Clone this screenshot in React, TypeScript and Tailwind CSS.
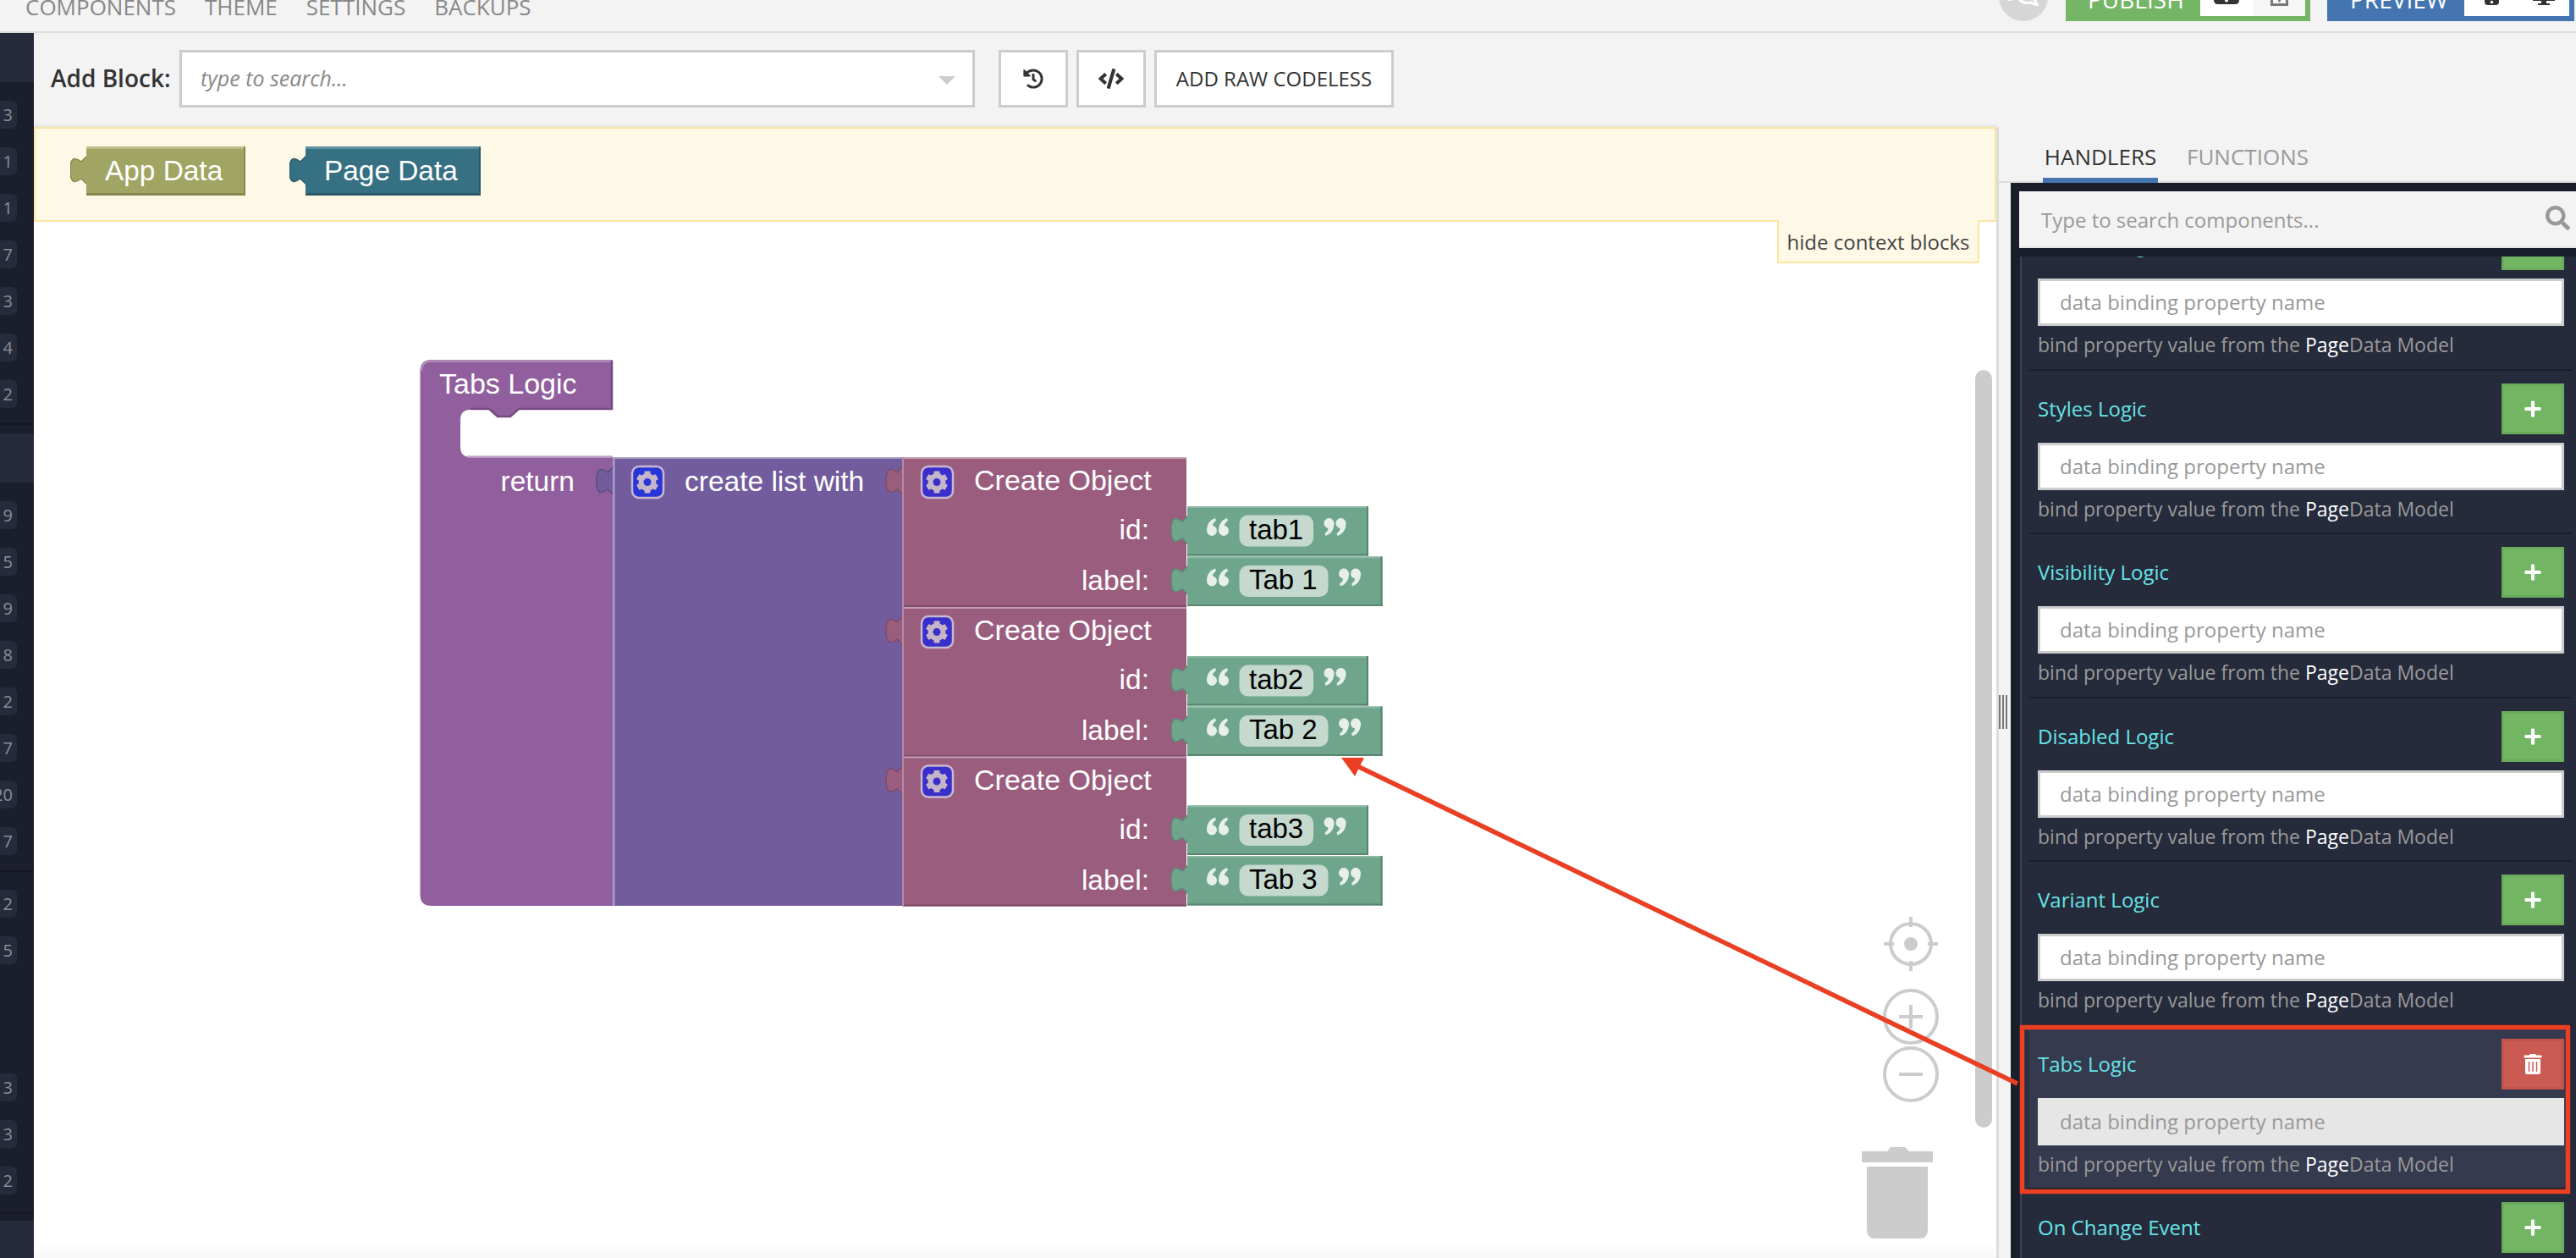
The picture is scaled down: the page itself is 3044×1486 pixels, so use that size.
import { FaCode, FaHistory, FaPlus, FaRegComments, FaSearch, FaTrashAlt } from "react-icons/fa";

// =============================================================================
// App.tsx
// Codeless logic editor: top nav, block canvas and the handlers panel.
// =============================================================================

const BLOCK_FONT = "font-['Liberation_Sans',Arial,sans-serif]";

// ---------------------------------------------------------------------------
// Blockly-style pieces (page coordinates, the overlay svg uses them directly)
// ---------------------------------------------------------------------------

function puzzleTab(x: number, y: number) {
  return `M ${x + 1},${y - 2} L ${x - 6},${y + 5} C ${x - 12},${y + 1} ${x - 19},${y - 3} ${x - 19},${y + 15} C ${x - 19},${y + 33} ${x - 12},${y + 29} ${x - 6},${y + 25} L ${x + 1},${y + 32} Z`;
}

function Tab({ x, y, fill, edge }: { x: number; y: number; fill: string; edge: string }) {
  return <path d={puzzleTab(x, y)} fill={fill} stroke={edge} strokeWidth={1.5} />;
}

function Gear({ x, y, fill }: { x: number; y: number; fill: string }) {
  const cx = x + 19;
  const cy = y + 19.5;
  return (
    <g>
      <rect x={x + 1} y={y + 1} width={37} height={37} rx={8} fill={fill} stroke="#c7b8d0" strokeWidth={2.5} />
      {[0, 60, 120, 180, 240, 300].map((a) => (
        <rect key={a} x={cx - 3.5} y={cy - 13} width={7} height={6} rx={1} fill="#c5b5c9" transform={`rotate(${a} ${cx} ${cy})`} />
      ))}
      <circle cx={cx} cy={cy} r={7.5} fill="none" stroke="#c5b5c9" strokeWidth={6} />
    </g>
  );
}

function Label({ x, y, children, end, size = 33.5 }: { x: number; y: number; children: string; end?: boolean; size?: number }) {
  return (
    <text x={x} y={y} fill="#fff" fontSize={size} textAnchor={end ? "end" : "start"} className={BLOCK_FONT}>
      {children}
    </text>
  );
}

// Blockly's quote marks are images, so they are drawn here: 26 x 21 box.
function Quote({ x, y, closing }: { x: number; y: number; closing?: boolean }) {
  const mark = "C 0,7 4,2 10,0 L 11,3 C 8,5 7,7 7,9 A 6,6 0 1 1 0,15 Z";
  return (
    <g transform={closing ? `translate(${x + 26} ${y + 21}) rotate(180)` : `translate(${x} ${y})`} fill="#e6efea">
      <path d={`M 0,15 ${mark}`} />
      <path d={`M 0,15 ${mark}`} transform="translate(14 0)" />
    </g>
  );
}

function StringBlock({ y, width, pill, text }: { y: number; width: number; pill: number; text: string }) {
  const x = 1403;
  return (
    <g>
      <Tab x={x} y={y + 13} fill="#6fa58c" edge="#5b8a75" />
      <rect x={x} y={y} width={width} height={58.5} fill="#6fa58c" />
      <rect x={x} y={y} width={width - 2} height={2} fill="#8cb8a3" />
      <rect x={x} y={y + 56.5} width={width} height={2} fill="#598470" />
      <rect x={x + width - 2} y={y} width={2} height={58.5} fill="#598470" />
      <Quote x={1426} y={y + 14} />
      <rect x={1464.5} y={y + 10.5} width={pill} height={37} rx={10} fill="#c5d9cf" />
      <text x={1476} y={y + 38.5} fontSize={33} fill="#000" className={BLOCK_FONT}>
        {text}
      </text>
      <Quote x={1464.5 + pill + 12.5} y={y + 14} closing />
    </g>
  );
}

function CreateObject({ y, id, label }: { y: number; id: string; label: string }) {
  return (
    <g>
      <Tab x={1066} y={y + 13} fill="#9b5d7e" edge="#7f4b67" />
      <rect x={1066} y={y} width={336} height={177} fill="#9b5d7e" />
      <rect x={1066} y={y} width={336} height={2} fill="#c39db1" />
      <rect x={1066} y={y} width={2} height={177} fill="#b58aa1" />
      <rect x={1068} y={y + 175} width={334} height={2} fill="#7f4b67" />
      <Gear x={1088} y={y + 10} fill="#3a2fcb" />
      <Label x={1151} y={y + 39} size={34}>Create Object</Label>
      <Label x={1358} y={y + 97} end>id:</Label>
      <Label x={1358} y={y + 157} end>label:</Label>
      <StringBlock y={y + 58} width={214} pill={87.5} text={id} />
      <StringBlock y={y + 117.5} width={230.5} pill={105} text={label} />
    </g>
  );
}

function LogicBlocks() {
  return (
    <g>
      {/* Tabs Logic wrapper */}
      <path
        d="M 496.5,438 Q 496.5,425 510,425 H 724 V 484 H 613 L 603,493 H 588 L 578,484 H 556 Q 544,484 544,496 V 528 Q 544,540 556,540 H 724 V 1070 H 510 Q 496.5,1070 496.5,1057 Z"
        fill="#915f9e"
      />
      <path d="M 498,438 Q 498,426.5 510,426.5 H 724" fill="none" stroke="#b08fb9" strokeWidth={2.5} />
      <path d="M 723,426 V 483 H 613 L 603,492 H 588 L 578,483 H 556" fill="none" stroke="#744b7f" strokeWidth={2.5} />
      <path d="M 552,539.5 H 724" fill="none" stroke="#c0a6c8" strokeWidth={2.5} />
      <Label x={519} y={465} size={34}>Tabs Logic</Label>
      <Label x={679} y={580} end>return</Label>

      {/* create list with */}
      <Tab x={724} y={553} fill="#725c9d" edge="#5b4a7e" />
      <rect x={724} y={540} width={342} height={530} fill="#725c9d" />
      <rect x={724} y={540} width={342} height={2} fill="#a99cc6" />
      <rect x={724} y={540} width={2.5} height={530} fill="#a99cc6" />
      <Gear x={746} y={550} fill="#2a35d8" />
      <Label x={809} y={580}>create list with</Label>

      <CreateObject y={540} id="tab1" label="Tab 1" />
      <CreateObject y={717} id="tab2" label="Tab 2" />
      <CreateObject y={893.5} id="tab3" label="Tab 3" />

      {/* Workspace controls */}
      <g fill="none" stroke="#ccc" strokeWidth={4}>
        <circle cx={2258} cy={1115} r={24} />
        <path d="M 2258,1083 V 1095 M 2258,1135 V 1147 M 2226,1115 H 2238 M 2278,1115 H 2290" />
        <circle cx={2258} cy={1201} r={31} />
        <path d="M 2258,1187 V 1215 M 2244,1201 H 2272" />
        <circle cx={2258} cy={1269} r={31} />
        <path d="M 2244,1269 H 2272" />
      </g>
      <circle cx={2258} cy={1115} r={8} fill="#ccc" />
      <g fill="#ccc">
        <path d="M 2230,1360 L 2234,1355 H 2251 L 2256,1360 H 2284 V 1373 H 2200 V 1360 Z" />
        <path d="M 2206,1378 H 2278 V 1453 Q 2278,1463 2268,1463 H 2216 Q 2206,1463 2206,1453 Z" />
      </g>
    </g>
  );
}

function ContextBlock({ width, fill, light, dark, children }: { width: number; fill: string; light: string; dark: string; children: string }) {
  return (
    <svg width={width + 19} height={58} viewBox={`-19 0 ${width + 19} 58`} className="-mt-[8px] shrink-0">
      <path d={puzzleTab(0, 13)} fill={fill} stroke={dark} strokeWidth={1.5} />
      <rect x={0} y={0} width={width} height={58} fill={fill} />
      <rect x={0} y={0} width={width} height={3} fill={light} />
      <rect x={0} y={55} width={width} height={3} fill={dark} />
      <rect x={width - 2} y={0} width={2} height={58} fill={dark} />
      <text x={22} y={40} fill="#fff" fontSize={33.4} className={BLOCK_FONT}>
        {children}
      </text>
    </svg>
  );
}

// ---------------------------------------------------------------------------
// Left rail
// ---------------------------------------------------------------------------

function Badges({ items, className }: { items: string[]; className: string }) {
  return (
    <div className={`flex flex-col gap-[22px] ${className}`}>
      {items.map((n, i) => (
        <div
          key={i}
          className="flex h-[33px] w-[20px] items-center justify-end overflow-hidden whitespace-nowrap rounded-r-[6px] bg-[#252b3b] pr-[5px] text-[20px] text-[#8b8e96]"
        >
          {n}
        </div>
      ))}
    </div>
  );
}

function Rail() {
  return (
    <aside className="flex h-full w-[40px] shrink-0 flex-col overflow-hidden bg-[#1b1e2b]">
      <div className="h-[58px] shrink-0 bg-[#252b3b]" />
      <Badges items={["3", "1", "1", "7", "3", "4", "2"]} className="pt-[22px] pb-[18px]" />
      <div className="h-[2px] shrink-0 bg-[#151722]" />
      <div className="mt-[10px] h-[58px] shrink-0 bg-[#252b3b]" />
      <Badges items={["9", "5", "9", "8", "2", "7", "20", "7"]} className="pt-[22px] pb-[18px]" />
      <div className="h-[2px] shrink-0 bg-[#151722]" />
      <Badges items={["2", "5"]} className="pt-[21px]" />
      <Badges items={["3", "3", "2"]} className="mt-[129px] pb-[21px]" />
      <div className="h-[2px] shrink-0 bg-[#151722]" />
      <div className="mt-[8px] flex-1 bg-[#252b3b]" />
    </aside>
  );
}

// ---------------------------------------------------------------------------
// Handlers panel
// ---------------------------------------------------------------------------

function HandlerRow({ title, active }: { title: string; active?: boolean }) {
  return (
    <div
      className={[
        "h-[193.5px] shrink-0 border-b-2 border-[#1b1e2b] pt-[15px] pl-[10px]",
        active ? "-ml-[6px] mr-[7px] border-l-[6px] border-l-[#2c3044] bg-[#353a4e] pr-[7px]" : "ml-0 mr-[4px] pr-[10px]",
      ].join(" ")}
    >
      <div className="flex h-[60px] items-center justify-between">
        <span className="text-[24px] text-[#67e3e6]">{title}</span>
        <button
          type="button"
          className={[
            "flex h-[60px] w-[74px] items-center justify-center border-[3px] text-white",
            active ? "border-[#c4534b] bg-[#cb5a52]" : "border-[#6aab5c] bg-[#72b663]",
          ].join(" ")}
        >
          {active ? <FaTrashAlt size={24} /> : <FaPlus size={22} />}
        </button>
      </div>
      <div
        className={[
          "mt-[10px] flex h-[56px] items-center text-[24px] text-[#999]",
          active ? "bg-[#e6e6e6] pl-[26px]" : "border-[3px] border-[#ccc] bg-white pl-[23px]",
        ].join(" ")}
      >
        data binding property name
      </div>
      <p className="mt-[6px] text-[23px] leading-[32px] text-[#999]">
        bind property value from the <span className="text-white">Page</span>Data Model
      </p>
    </div>
  );
}

function Panel() {
  const rows = ["Classes Logic", "Styles Logic", "Visibility Logic", "Disabled Logic", "Variant Logic", "Tabs Logic", "On Change Event"];
  return (
    <div className="flex w-[685px] shrink-0 flex-col border-l-[3px] border-[#dcdcdc] bg-[#f3f3f3]">
      <div className="flex h-[66px] items-end gap-[34px] border-b-2 border-[#dcdcdc] pl-[52px]">
        <div className="relative -mb-[2px] h-[50px] w-[136px] border-b-[6px] border-[#4475b0] text-center text-[26px] leading-[38px] text-[#333]">
          HANDLERS
        </div>
        <div className="h-[48px] text-[26px] leading-[38px] text-[#999]">FUNCTIONS</div>
      </div>
      <div className="ml-[14px] flex min-h-0 flex-1 flex-col overflow-hidden bg-[#1b1e2b]">
        <div className="h-[87px] shrink-0 pt-[10px] pl-[10px]">
          <div className="flex h-[67px] items-center justify-between border-b-2 border-[#e6e6e6] bg-[#f3f3f3] pt-[2px] pr-[7px] pl-[26px] text-[24px] text-[#999]">
            Type to search components...
            <FaSearch size={29} className="-mt-[4px] text-[#999]" />
          </div>
        </div>
        <div className="ml-[11px] min-h-0 flex-1 overflow-hidden border-l-2 border-[#3a4059] bg-[#252b3b]">
          <div className="-mt-[59px] flex flex-col pl-[9px]">
            {rows.map((t) => (
              <HandlerRow key={t} title={t} active={t === "Tabs Logic"} />
            ))}
          </div>
        </div>
      </div>
    </div>
  );
}

// ---------------------------------------------------------------------------
// Page
// ---------------------------------------------------------------------------

function Nav() {
  return (
    <header className="flex h-[39px] shrink-0 items-end overflow-hidden border-b-2 border-[#dddddd] bg-[#f3f3f3] text-[26px]">
      <nav className="flex h-[37px] flex-1 items-end gap-[34px] pb-[11px] pl-[30px] leading-[36px] text-[#888]">
        {["COMPONENTS", "THEME", "SETTINGS", "BACKUPS"].map((n) => (
          <span key={n} className="shrink-0">
            {n}
          </span>
        ))}
      </nav>
      <div className="mr-[21px] mb-[12px] flex h-[59px] w-[58px] shrink-0 items-start justify-center overflow-hidden rounded-full bg-[#d6d6d6] text-white">
        <FaRegComments size={36} className="mt-[9px]" />
      </div>
      <div className="mr-[20px] mb-[12px] flex h-[60px] w-[289px] shrink-0 items-end justify-between bg-[#75b566] pr-[6px] pb-[6px] pl-[26px] text-[28px] text-white">
        <span className="mb-[2px] leading-[36px]">PUBLISH</span>
        <div className="flex h-[19px] w-[124px] overflow-hidden">
          <div className="flex w-[62px] justify-center bg-white">
            <svg width="30" height="5" viewBox="0 0 30 5">
              <path d="M 0,0 H 30 V 0 Q 30,5 25,5 H 5 Q 0,5 0,0 Z" fill="#333" />
              <circle cx="15" cy="0.5" r="2" fill="#fff" />
            </svg>
          </div>
          <div className="flex w-[62px] justify-center bg-[#f6f6f6]">
            <svg width="21" height="7" viewBox="0 0 21 7">
              <path d="M 1.5,0 V 5.5 H 19.5 V 0" fill="none" stroke="#777" strokeWidth="3" />
              <circle cx="10.5" cy="1" r="1.5" fill="#777" />
            </svg>
          </div>
        </div>
      </div>
      <div className="mr-[2px] mb-[12px] flex h-[60px] w-[292px] shrink-0 items-end justify-between bg-[#4475b0] pr-[6px] pb-[6px] pl-[27px] text-[28px] text-white">
        <span className="mb-[2px] leading-[36px]">PREVIEW</span>
        <div className="flex h-[19px] w-[124px] overflow-hidden bg-white">
          <div className="flex w-[64px] justify-center pl-[1px]">
            <svg width="17" height="6" viewBox="0 0 17 6">
              <path d="M 0,0 H 17 V 2 Q 17,6 13,6 H 4 Q 0,6 0,2 Z" fill="#333" />
              <circle cx="8.5" cy="2.5" r="1.7" fill="#fff" />
            </svg>
          </div>
          <div className="flex w-[60px] justify-center">
            <svg width="26" height="6" viewBox="0 0 26 6">
              <path d="M 0,0 H 26 V 1 H 16 V 4 H 20 V 6 H 6 V 4 H 10 V 1 H 0 Z" fill="#333" />
            </svg>
          </div>
        </div>
      </div>
    </header>
  );
}

function Toolbar() {
  return (
    <div className="flex h-[111px] shrink-0 items-start border-b-[3px] border-[#e8e8e8] bg-[#f3f3f3] pt-[20px] pl-[20px] text-[#333]">
      <label className="mr-[10px] flex h-[66px] w-[142px] items-center whitespace-nowrap text-[28px] font-semibold">Add Block:</label>
      <div className="flex h-[68px] w-[940px] items-center justify-between border-[3px] border-[#ccc] bg-white pr-[20px] pl-[22px] text-[25px] text-[#888] italic">
        type to search...
        <span className="mt-[4px] h-0 w-0 border-x-[10px] border-t-[10px] border-x-transparent border-t-[#ccc]" />
      </div>
      <button type="button" className="ml-[28px] flex h-[68px] w-[82px] items-center justify-center border-[3px] border-[#ccc] bg-white">
        <FaHistory size={24} />
      </button>
      <button type="button" className="ml-[10px] flex h-[68px] w-[82px] items-center justify-center border-[3px] border-[#ccc] bg-white">
        <FaCode size={30} />
      </button>
      <button type="button" className="ml-[10px] h-[68px] w-[283px] border-[3px] border-[#ccc] bg-white text-[24px] whitespace-nowrap">
        ADD RAW CODELESS
      </button>
    </div>
  );
}

function Canvas() {
  return (
    <div className="relative min-h-0 flex-1 overflow-hidden bg-white">
      <div className="flex h-[112px] items-center gap-[52px] border-2 border-[#fbe5a0] bg-[#fef8e7] pl-[41px]">
        <ContextBlock width={188} fill="#a1a564" light="#bcbf8c" dark="#868a4f">App Data</ContextBlock>
        <ContextBlock width={207} fill="#357083" light="#5e8d9c" dark="#2a5a6a">Page Data</ContextBlock>
      </div>
      <div className="absolute top-[110px] right-[20px] flex h-[51px] w-[239px] items-center justify-center border-2 border-t-0 border-[#fbe5a0] bg-[#fef8e7] pt-[2px] text-[24px] text-[#444]">
        hide context blocks
      </div>
      <div className="absolute top-[287px] right-[5px] h-[895px] w-[20px] rounded-full bg-[#ccc]" />
      <div className="absolute right-0 bottom-0 left-0 h-[18px] bg-gradient-to-b from-white to-[#f8f8f8]" />
      <svg className="absolute top-0 left-0" width="2319" height="1336" viewBox="40 150 2319 1336">
        <LogicBlocks />
      </svg>
    </div>
  );
}

export default function App() {
  return (
    <div className="relative flex h-[1486px] w-[3044px] flex-col overflow-hidden bg-[#f3f3f3] font-['Open_Sans',sans-serif]">
      <Nav />
      <div className="flex min-h-0 flex-1">
        <Rail />
        <div className="flex w-[2322px] shrink-0 min-h-0">
          <div className="flex w-[2319px] flex-col">
            <Toolbar />
            <Canvas />
          </div>
        </div>
        <div className="-ml-[3px] flex min-h-0 flex-col pt-[111px]">
          <div className="relative flex min-h-0 flex-1">
            <Panel />
            <div className="absolute top-[671px] left-[3px] flex h-[40px] w-[10px] justify-between">
              <span className="w-[2px] bg-[#777]" />
              <span className="w-[2px] bg-[#777]" />
              <span className="w-[2px] bg-[#777]" />
            </div>
          </div>
        </div>
      </div>
      {/* Red annotation over the whole page */}
      <svg className="pointer-events-none absolute inset-0" width="3044" height="1486" viewBox="0 0 3044 1486">
        <path d="M 1606,906 L 2384,1280" stroke="#ea3f23" strokeWidth={5.5} fill="none" />
        <path d="M 1585,895 L 1612,895 L 1601,917 Z" fill="#ea3f23" />
        <rect x={2389.5} y={1213.5} width={645} height={194} fill="none" stroke="#ea3f23" strokeWidth={5.5} />
      </svg>
    </div>
  );
}
